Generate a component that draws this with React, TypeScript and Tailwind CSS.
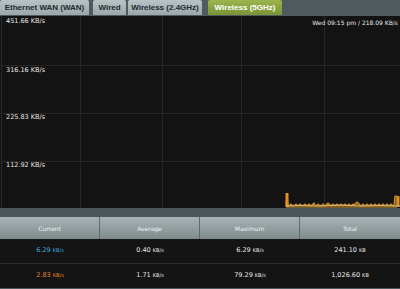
import React from "react";

const spikes: number[] = [
  206, 193, 205, 206, 205, 204, 206, 205, 206, 205, 204, 205, 206, 205, 204, 205, 206, 205, 205, 204,
  205, 206, 205, 204, 205, 206, 205, 204, 203, 205, 206, 205, 204, 205, 206, 205, 206, 204, 205, 206,
  205, 204, 203, 204, 205, 206, 205, 204, 205, 206, 205, 204, 205, 206, 205, 204, 205, 206, 205, 204,
  205, 206, 205, 204, 205, 206, 205, 204, 205, 204, 203, 202, 203, 204, 205, 206, 205, 204, 205, 206,
  205, 204, 205, 206, 205, 204, 205, 206, 205, 204, 205, 206, 205, 204, 205, 206, 205, 204, 205, 206,
  205, 204, 205, 206, 205, 204, 205, 206, 205, 196, 196, 196,
];

function Chart() {
  const startX = 286;
  const pts = spikes.map((y, i) => `${startX + i},${y - 16}`).join(" ");
  const area = `${startX},192 ${pts} ${startX + spikes.length - 1},192`;
  return (
    <svg width="400" height="192" className="absolute left-0 top-0">
      <line x1="1.5" y1="0" x2="1.5" y2="192" stroke="#2a2a2a" />
      {[80.5, 162.5, 241.5, 324.5].map((x) => (
        <line key={x} x1={x} y1="0" x2={x} y2="192" stroke="#262626" />
      ))}
      {[49.5, 97.5, 145.5].map((y) => (
        <line key={y} x1="0" y1={y} x2="400" y2={y} stroke="#262626" />
      ))}
      <polygon points={area} fill="#7a5a1e" />
      <polyline points={pts} fill="none" stroke="#d98a1f" strokeWidth="1.2" />
      <line x1="287" y1="177" x2="287" y2="191" stroke="#e0901f" strokeWidth="3" />
      <line x1="398" y1="180" x2="398" y2="191" stroke="#e0901f" strokeWidth="3" />
      <polyline
        points={`286,190 300,189.5 320,190 340,189 360,190 380,189.5 400,190`}
        fill="none"
        stroke="#c9b98a"
        strokeWidth="1"
      />
    </svg>
  );
}

function Unit({ children }: { children: React.ReactNode }) {
  return <span className="text-[5px] ml-[2px]">{children}</span>;
}

const tabCls =
  "h-[15px] flex items-center justify-center bg-gradient-to-b from-[#b9c3c5] to-[#9ba7aa] text-[#1f2a2e] text-[8px] font-bold rounded-t-[2px] whitespace-nowrap";

export default function App() {
  const font = { fontFamily: '"DejaVu Sans", Verdana, sans-serif' };
  const tabFont = { fontFamily: '"Liberation Sans", Arial, sans-serif' };
  return (
    <div className="w-[400px] h-[289px] bg-[#4b5659] flex flex-col overflow-hidden" style={font}>
      <div className="h-[16px] flex items-stretch bg-[#4e5a5d]" style={tabFont}>
        <div className={`${tabCls} w-[89px]`}>Ethernet WAN (WAN)</div>
        <div className={`${tabCls} w-[33px] ml-[4px]`}>Wired</div>
        <div className={`${tabCls} w-[74px] ml-[2px]`}>Wireless (2.4GHz)</div>
        <div className="ml-[6px] w-[74px] h-[15px] flex items-center justify-center bg-gradient-to-b from-[#9cb54c] to-[#7a9336] text-white text-[8px] font-bold rounded-t-[2px] whitespace-nowrap">
          Wireless (5GHz)
        </div>
      </div>
      <div className="relative h-[192px] bg-[#131313] text-[#e8e8e8] text-[6px]">
        <Chart />
        <div className="absolute left-[6px] top-[1px] text-[6.5px]">451.66 KB/s</div>
        <div className="absolute left-[6px] top-[50px] text-[6.5px]">316.16 KB/s</div>
        <div className="absolute left-[6px] top-[97px] text-[6.5px]">225.83 KB/s</div>
        <div className="absolute left-[6px] top-[145px] text-[6.5px]">112.92 KB/s</div>
        <div className="absolute right-[2px] top-[2px]">Wed 09:15 pm / 218.09 KB/s</div>
      </div>
      <div className="h-[9px] bg-[#4b5659]" />
      <div className="grid grid-cols-4 h-[22px] bg-gradient-to-b from-[#a9b3b5] to-[#7f8a8d] text-[#eef2f3] text-[6px]">
        {["Current", "Average", "Maximum", "Total"].map((h, i) => (
          <div key={h} className={`flex items-center justify-center ${i < 3 ? "border-r border-[#5f6a6d]" : ""}`}>
            {h}
          </div>
        ))}
      </div>
      <div className="grid grid-cols-4 h-[25px] bg-[#141414] text-[#e8e8e8] text-[6.5px] border-b border-[#2c2c2c]">
        <div className="flex items-center justify-center text-[#3fa9d9]">6.29<Unit>KB/s</Unit></div>
        <div className="flex items-center justify-center">0.40<Unit>KB/s</Unit></div>
        <div className="flex items-center justify-center">6.29<Unit>KB/s</Unit></div>
        <div className="flex items-center justify-center">241.10<Unit>KB</Unit></div>
      </div>
      <div className="grid grid-cols-4 h-[24px] bg-[#141414] text-[#e8e8e8] text-[6.5px]">
        <div className="flex items-center justify-center text-[#e58a2a]">2.83<Unit>KB/s</Unit></div>
        <div className="flex items-center justify-center">1.71<Unit>KB/s</Unit></div>
        <div className="flex items-center justify-center">79.29<Unit>KB/s</Unit></div>
        <div className="flex items-center justify-center">1,026.60<Unit>KB</Unit></div>
      </div>
    </div>
  );
}
